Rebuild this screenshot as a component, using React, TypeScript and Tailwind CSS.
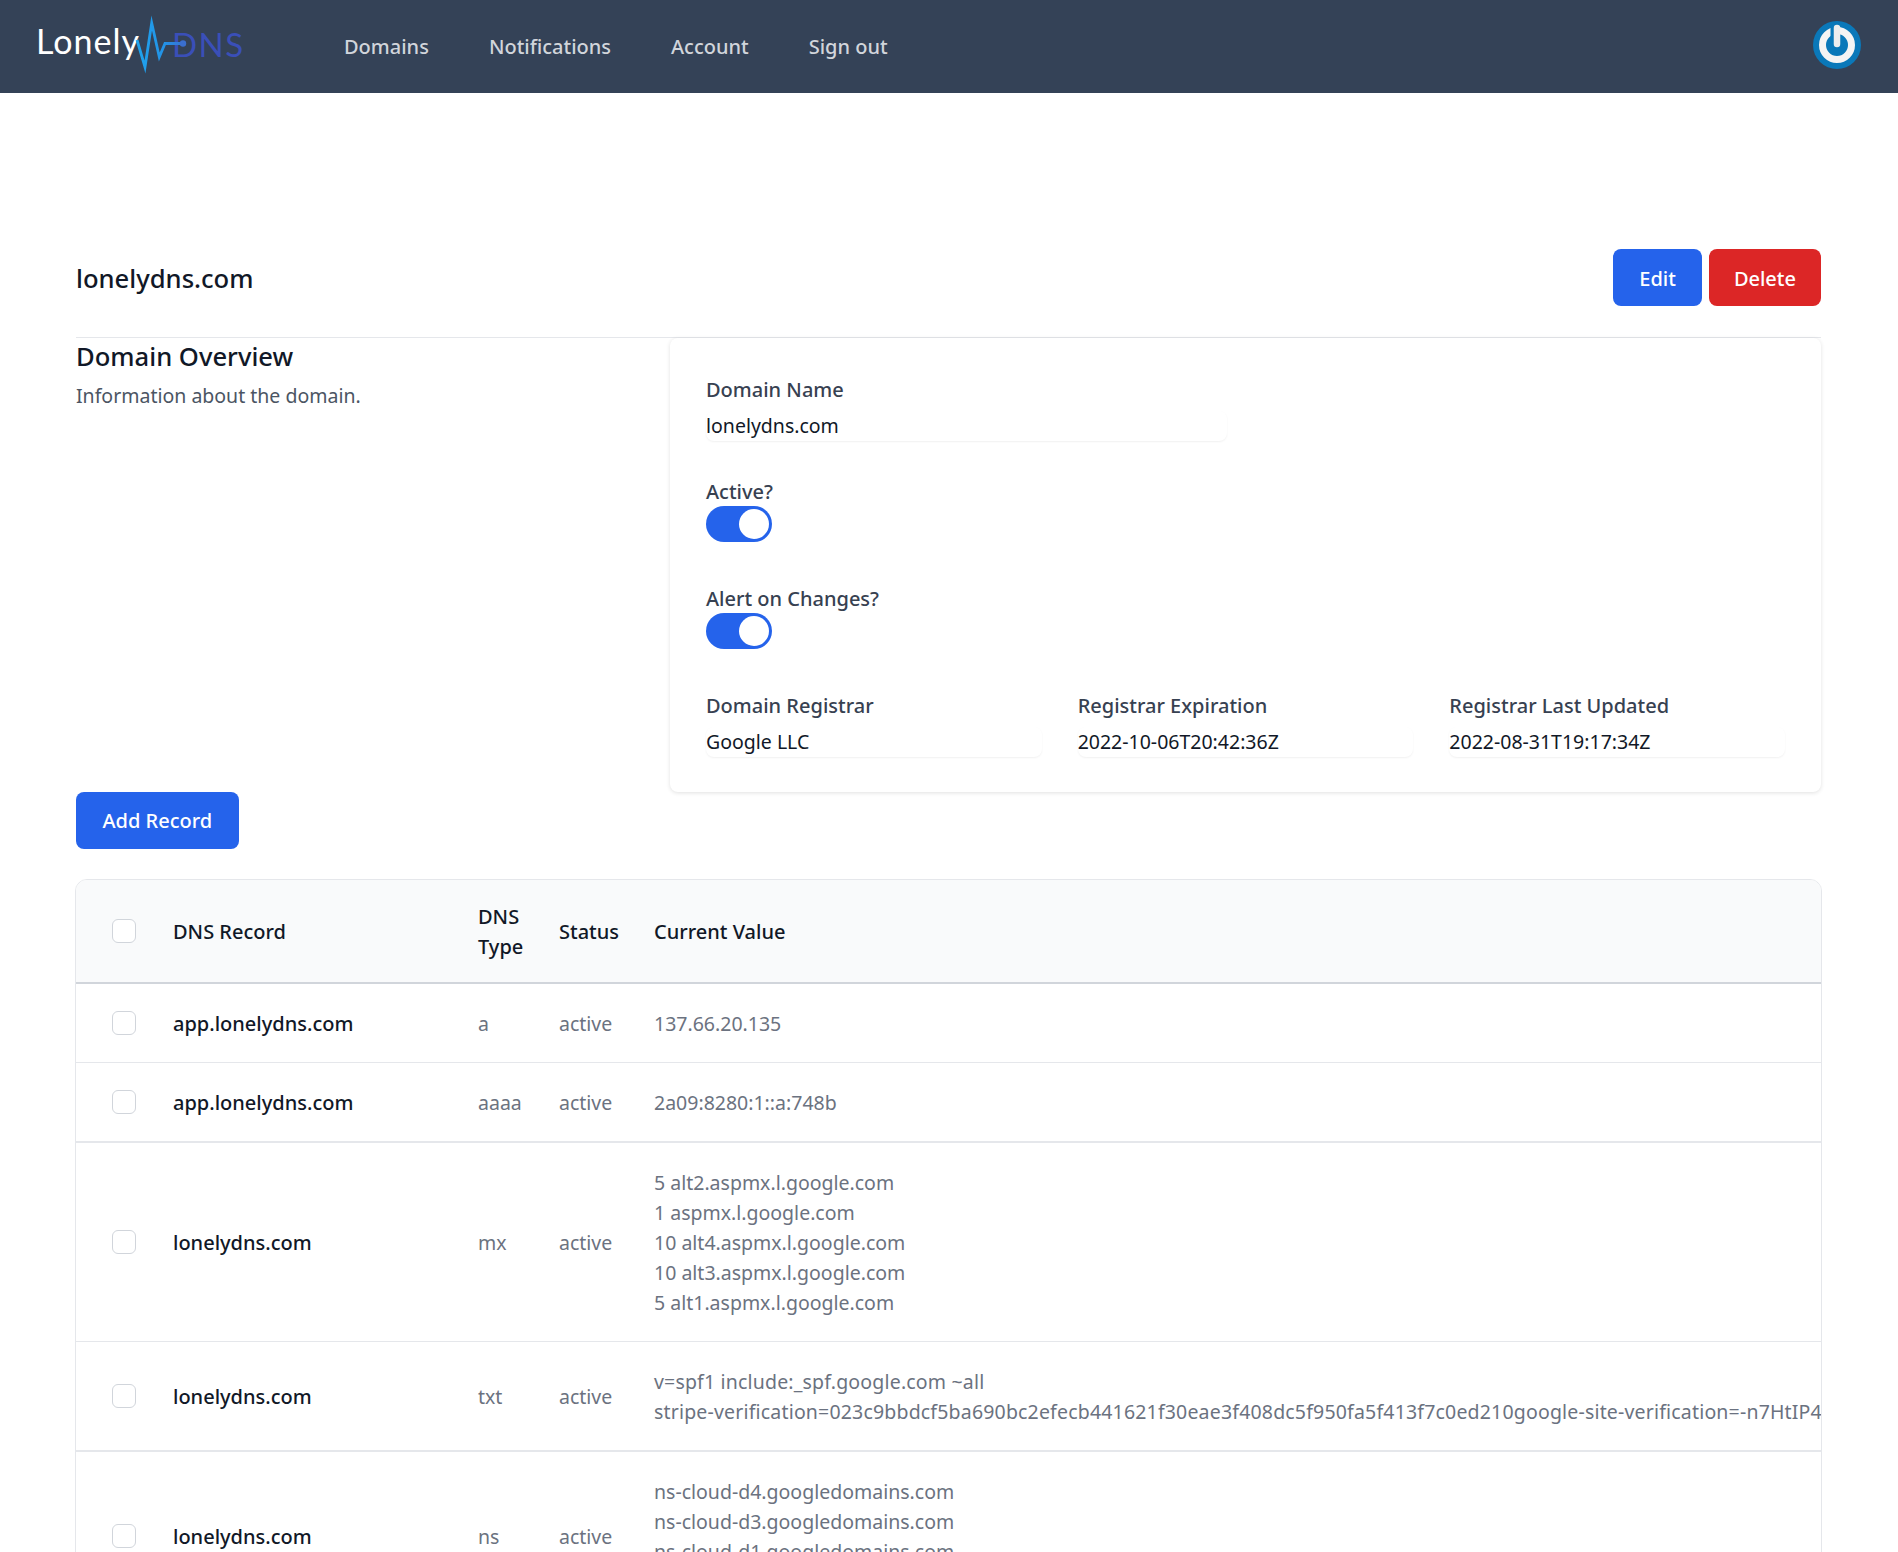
const font = "font-['Noto_Sans',sans-serif]";

const rows = [
  { name: "app.lonelydns.com", type: "a", value: ["137.66.20.135"], border: "border-b border-gray-200", spacing: "" },
  { name: "app.lonelydns.com", type: "aaaa", value: ["2a09:8280:1::a:748b"], border: "border-b-2 border-gray-200", spacing: "" },
  {
    name: "lonelydns.com",
    type: "mx",
    value: [
      "5 alt2.aspmx.l.google.com",
      "1 aspmx.l.google.com",
      "10 alt4.aspmx.l.google.com",
      "10 alt3.aspmx.l.google.com",
      "5 alt1.aspmx.l.google.com",
    ],
    border: "border-b border-gray-200",
    spacing: "",
  },
  {
    name: "lonelydns.com",
    type: "txt",
    value: [
      "v=spf1 include:_spf.google.com ~all",
      "stripe-verification=023c9bbdcf5ba690bc2efecb441621f30eae3f408dc5f950fa5f413f7c0ed210google-site-verification=-n7HtIP4",
    ],
    border: "border-b-2 border-gray-200",
    spacing: "tracking-[0.18px]",
  },
  {
    name: "lonelydns.com",
    type: "ns",
    value: [
      "ns-cloud-d4.googledomains.com",
      "ns-cloud-d3.googledomains.com",
      "ns-cloud-d1.googledomains.com",
      "ns-cloud-d2.googledomains.com",
    ],
    border: "",
    spacing: "",
  },
];

function Logo() {
  return (
    <svg width="220" height="74" viewBox="0 0 220 74" className="shrink-0">
      <defs>
        <linearGradient id="pulse" gradientUnits="userSpaceOnUse" x1="105" y1="0" x2="155" y2="0">
          <stop offset="0" stopColor="#1ea5ee" />
          <stop offset="0.6" stopColor="#2391e6" />
          <stop offset="1" stopColor="#3a6fd0" />
        </linearGradient>
      </defs>
      <text x="6" y="43.5" fill="#ffffff" fontSize="34" letterSpacing="1" fontFamily="Lato, sans-serif">
        Lonely
      </text>
      <text x="142" y="46.5" fill="#3a4fb8" fontSize="33" letterSpacing="1.5" fontFamily="Lato, sans-serif">
        DNS
      </text>
      <path
        d="M107 30 L 115 57 L 121.7 13 L 129.3 47 L 135 33.5 L 153 33.5"
        fill="none"
        stroke="url(#pulse)"
        strokeWidth="2.8"
        strokeLinejoin="miter"
        strokeMiterlimit="20"
      />
      <circle cx="153" cy="33.5" r="3.2" fill="#3a6fd0" />
    </svg>
  );
}

function PowerIcon() {
  return (
    <svg width="48" height="48" viewBox="0 0 48 48">
      <circle cx="24" cy="24" r="24" fill="#0a78b9" />
      <circle cx="24" cy="24" r="14.5" fill="none" stroke="#f4f4f4" strokeWidth="7" />
      <path d="M20 4 V 21" fill="none" stroke="#0a78b9" strokeWidth="5" />
      <path d="M24 7 V 23" fill="none" stroke="#eeeeee" strokeWidth="6.5" strokeLinecap="round" />
    </svg>
  );
}

function Toggle() {
  return (
    <div className="flex h-9 w-[66px] items-center justify-end rounded-full bg-[#2563eb] pr-[3px]">
      <span className="h-[30px] w-[30px] rounded-full bg-white" />
    </div>
  );
}

function Field({ label, value, span }: { label: string; value: string; span: string }) {
  return (
    <div className={span}>
      <div className="h-[30px] text-[20px] leading-[30px] font-medium text-[#374151]">{label}</div>
      <div className="mt-1.5 h-[30px] rounded-lg text-[19.5px] leading-[30px] text-[#111827] shadow-[0_1px_2px_rgba(0,0,0,0.06)]">
        {value}
      </div>
    </div>
  );
}

function Checkbox() {
  return <div className="h-6 w-6 rounded-md border border-[#d1d5db] bg-white" />;
}

export default function App() {
  return (
    <div className={`h-[1552px] overflow-hidden bg-white ${font}`}>
      <nav className="flex h-[93px] items-center bg-[#344257] pl-[30px] pr-[37px]">
        <Logo />
        <div className="ml-[94px] flex gap-[60px] text-[20px] font-medium text-[#d1d5db]">
          <span>Domains</span>
          <span>Notifications</span>
          <span>Account</span>
          <span>Sign out</span>
        </div>
        <div className="mb-[4px] ml-auto">
          <PowerIcon />
        </div>
      </nav>

      <main className="pr-[77px] pl-[76px]">
        <div className="flex items-center justify-between border-b border-gray-200 pt-[156px] pb-[31px]">
          <h1 className="pt-[3px] text-[25.6px] font-medium text-[#111827]">lonelydns.com</h1>
          <div className="flex gap-[7px]">
            <button className="h-[57px] rounded-lg bg-[#2563eb] px-[26px] pt-[2px] text-[20px] font-medium text-white">Edit</button>
            <button className="h-[57px] rounded-lg bg-[#dc2626] px-[25px] pt-[2px] text-[20px] font-medium text-white">Delete</button>
          </div>
        </div>

        <div className="grid grid-cols-[558px_1fr] gap-[36px]">
          <div className="pt-px">
            <h3 className="text-[25.6px] leading-[36px] font-medium text-[#111827]">Domain Overview</h3>
            <p className="mt-1.5 text-[19.5px] leading-[30px] text-[#4b5563]">Information about the domain.</p>
          </div>
          <div className="rounded-lg bg-white px-9 pt-[37px] pb-[35px] shadow-[0_1px_4px_rgba(0,0,0,0.12)]">
            <div className="grid grid-cols-6 gap-x-9 gap-y-9">
              <Field span="col-span-3 col-end-4" label="Domain Name" value="lonelydns.com" />
              <div className="col-span-6 col-start-1">
                <div className="h-[29px] text-[20px] leading-[30px] font-medium text-[#374151]">Active?</div>
                <div className="h-[42px]">
                  <Toggle />
                </div>
              </div>
              <div className="col-span-6">
                <div className="h-[29px] text-[20px] leading-[30px] font-medium text-[#374151]">Alert on Changes?</div>
                <div className="h-[42px]">
                  <Toggle />
                </div>
              </div>
              <Field span="col-span-2" label="Domain Registrar" value="Google LLC" />
              <Field span="col-span-2" label="Registrar Expiration" value="2022-10-06T20:42:36Z" />
              <Field span="col-span-2" label="Registrar Last Updated" value="2022-08-31T19:17:34Z" />
            </div>
          </div>
        </div>

        <button className="block h-[57px] rounded-lg bg-[#2563eb] px-[26.5px] text-[20px] font-medium text-white">Add Record</button>

        <div className="-mx-px mt-[30px] overflow-hidden rounded-xl border border-gray-200">
          <table className="w-full table-fixed border-collapse text-left text-[19.5px] leading-[30px]">
            <thead className="bg-[#f9fafb]">
              <tr className="border-b-2 border-[#d1d5db]">
                <th className="w-[97px] pl-[36px]">
                  <Checkbox />
                </th>
                <th className="w-[305px] pt-[2px] text-[20px] font-medium text-[#111827]">DNS Record</th>
                <th className="w-[81px] pt-[22px] pb-[20px] text-[20px] font-medium text-[#111827]">
                  DNS
                  <br />
                  Type
                </th>
                <th className="w-[95px] pt-[2px] text-[20px] font-medium text-[#111827]">Status</th>
                <th className="pt-[2px] text-[20px] font-medium text-[#111827]">Current Value</th>
              </tr>
            </thead>
            <tbody>
              {rows.map((row, i) => (
                <tr key={i} className={row.border}>
                  <td className="pl-[36px]">
                    <Checkbox />
                  </td>
                  <td className="pt-[2px] text-[20px] font-medium text-[#111827]">{row.name}</td>
                  <td className="pt-[2px] text-[#6b7280]">{row.type}</td>
                  <td className="pt-[2px] text-[#6b7280]">active</td>
                  <td className={`pt-[25px] pb-[23px] whitespace-nowrap text-[#6b7280] ${row.spacing}`}>
                    {row.value.map((line) => (
                      <div key={line}>{line}</div>
                    ))}
                  </td>
                </tr>
              ))}
            </tbody>
          </table>
        </div>
      </main>
    </div>
  );
}
